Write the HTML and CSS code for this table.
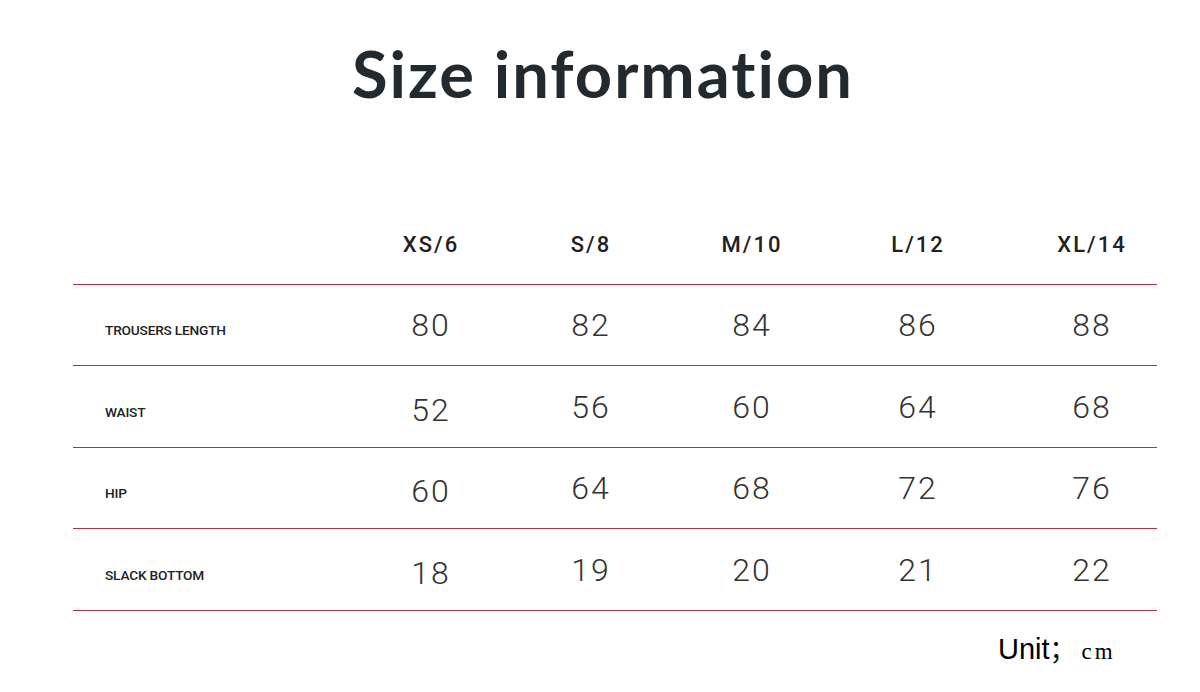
FILE: index.html
```html
<!DOCTYPE html>
<html>
<head>
<meta charset="utf-8">
<link rel="stylesheet" href="styles.css">
</head>
<body>
<div class="page">
  <h1 class="title">Size information</h1>
  <div class="table">
    <div class="row head">
      <div class="label"></div>
      <div class="cell">XS/6</div>
      <div class="cell">S/8</div>
      <div class="cell">M/10</div>
      <div class="cell">L/12</div>
      <div class="cell last">XL/14</div>
    </div>
    <div class="row r81">
      <div class="label">TROUSERS LENGTH</div>
      <div class="cell num">80</div>
      <div class="cell num">82</div>
      <div class="cell num">84</div>
      <div class="cell num">86</div>
      <div class="cell num last">88</div>
    </div>
    <div class="row r82">
      <div class="label">WAIST</div>
      <div class="cell num low">52</div>
      <div class="cell num">56</div>
      <div class="cell num">60</div>
      <div class="cell num">64</div>
      <div class="cell num last">68</div>
    </div>
    <div class="row r81">
      <div class="label">HIP</div>
      <div class="cell num low">60</div>
      <div class="cell num">64</div>
      <div class="cell num">68</div>
      <div class="cell num">72</div>
      <div class="cell num last">76</div>
    </div>
    <div class="row r82">
      <div class="label">SLACK BOTTOM</div>
      <div class="cell num low">18</div>
      <div class="cell num">19</div>
      <div class="cell num">20</div>
      <div class="cell num">21</div>
      <div class="cell num last">22</div>
    </div>
  </div>
  <div class="unit"><span class="u1">Unit</span><span class="semi">；</span><span class="cm">cm</span></div>
</div>
</body>
</html>
```
FILE: styles.css
```css
* { box-sizing: border-box; }
html, body { margin: 0; padding: 0; background: #fff; }
body { width: 1200px; height: 692px; overflow: hidden; }
.page { position: relative; width: 1200px; height: 692px; }
.title {
  margin: 0;
  height: 204px;
  padding-top: 28px;
  text-align: center;
  font-family: "Lato", sans-serif;
  font-weight: 700;
  font-size: 65px;
  letter-spacing: 2px;
  font-variant-ligatures: none;
  line-height: 90px;
  color: #222a31;
  padding-left: 6px;
}
.table { margin-left: 73px; width: 1084px; }
.row {
  display: grid;
  grid-template-columns: 277px 160px 160px 162px 170px 155px;
  align-items: center;
  border-bottom: 1px solid #b3313b;
}
.head { height: 81px; }
.r81 { height: 81px; }
.r82 { height: 82px; }
.label {
  padding-left: 32px;
  padding-top: 10px;
  font-family: "Roboto", sans-serif;
  font-weight: 500;
  font-size: 13.7px;
  letter-spacing: -0.2px;
  color: #222;
  white-space: nowrap;
}
.cell {
  text-align: center;
  color: #222;
}
.head .cell {
  font-family: "Roboto", sans-serif;
  font-weight: 500;
  font-size: 22px;
  letter-spacing: 2px;
  padding-left: 2px;
}
.head .cell.last { padding-left: 25px; }
.cell.last { padding-left: 23px; }
.num {
  font-family: "Roboto", sans-serif;
  font-weight: 300;
  font-size: 32px;
  letter-spacing: 2px;
  padding-left: 2px;
  color: #333;
}
.num.last { padding-left: 25px; }
.num.low { padding-top: 6px; }
.unit {
  margin-left: 998px;
  margin-top: 18px;
  display: flex;
  align-items: baseline;
  color: #000;
}
.u1 { font-family: "Liberation Sans", sans-serif; font-size: 29px; }
.semi { font-family: "Noto Sans CJK SC", sans-serif; font-size: 26px; width: 32px; }
.cm { font-family: "Liberation Serif", serif; font-size: 23px; letter-spacing: 3px; }
```
